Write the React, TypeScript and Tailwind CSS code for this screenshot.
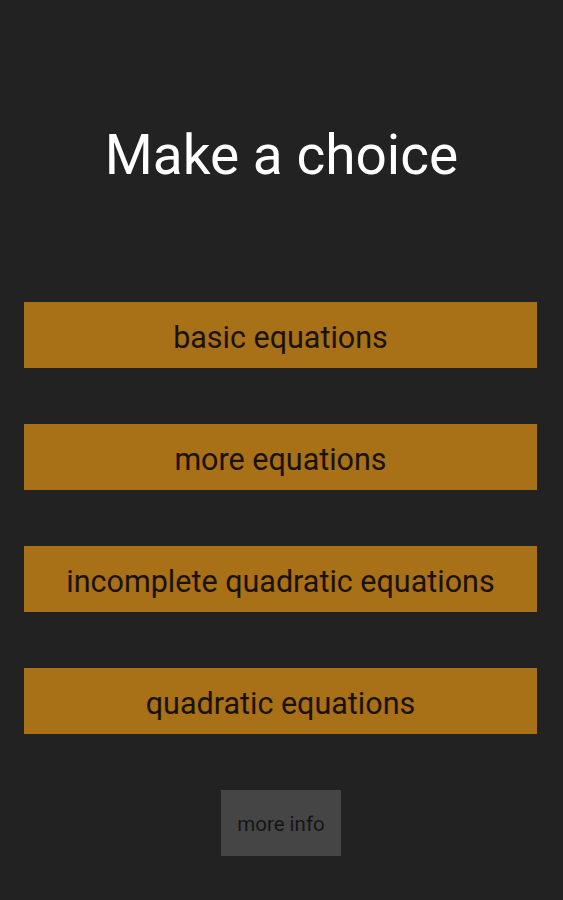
export default function App() {
  const items = ["basic equations", "more equations", "incomplete quadratic equations", "quadratic equations"];
  return (
    <div className="w-[563px] h-[900px] bg-[#222222] flex flex-col items-center" style={{ fontFamily: "Roboto, sans-serif" }}>
      <div className="mt-[124px] h-[62px] flex items-center text-white text-[55px] leading-none">Make a choice</div>
      <div className="mt-[116px] w-[513px] self-start ml-6 flex flex-col gap-[56px]">
        {items.map((t) => (
          <div key={t} className="h-[66px] bg-[#a87017] flex items-center justify-center pt-[5px] text-[#1a1208] text-[30.5px]">{t}</div>
        ))}
      </div>
      <div className="mt-[56px] w-[120px] h-[66px] self-start ml-[221px] bg-[#454545] flex items-center justify-center pt-[2px] text-[#151515] text-[20.5px]">more info</div>
    </div>
  );
}
